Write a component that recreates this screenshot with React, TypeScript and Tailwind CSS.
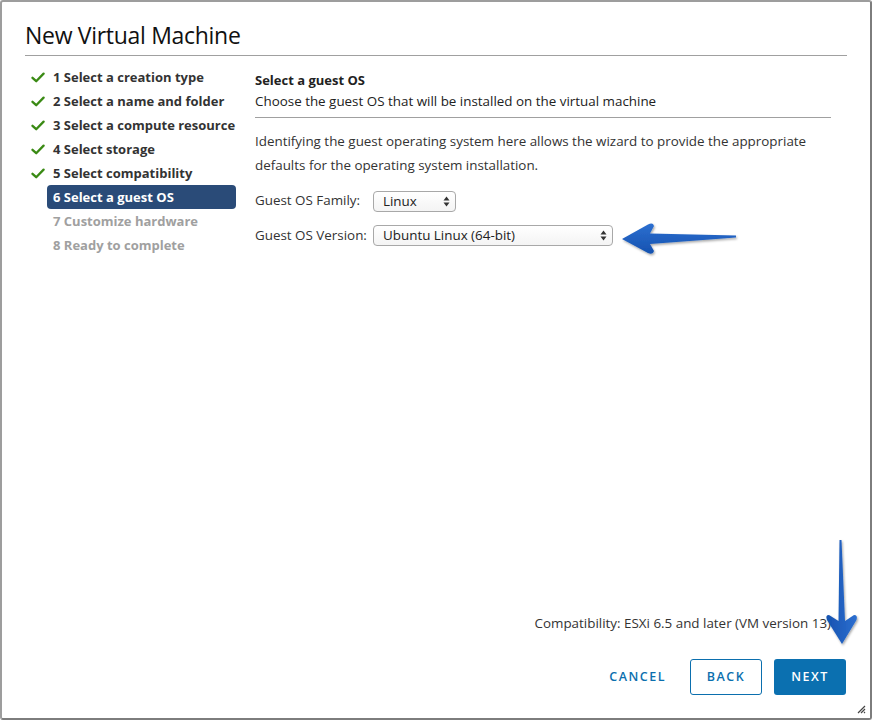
import React from 'react';

const steps = [
  { label: '1 Select a creation type', state: 'done' },
  { label: '2 Select a name and folder', state: 'done' },
  { label: '3 Select a compute resource', state: 'done' },
  { label: '4 Select storage', state: 'done' },
  { label: '5 Select compatibility', state: 'done' },
  { label: '6 Select a guest OS', state: 'active' },
  { label: '7 Customize hardware', state: 'todo' },
  { label: '8 Ready to complete', state: 'todo' },
];

function Check() {
  return (
    <svg width="14" height="11" viewBox="0 0 14 11">
      <path d="M1.5 5.8 L5.2 9.2 L12.6 1.6" fill="none" stroke="#3a8a14" strokeWidth="2.3" strokeLinecap="round" strokeLinejoin="round" />
    </svg>
  );
}

function Spinner() {
  return (
    <svg width="7" height="11" viewBox="0 0 7 11" className="shrink-0">
      <path d="M3.5 0.5 L6.5 4.5 L0.5 4.5 Z" fill="#333" />
      <path d="M3.5 10.5 L6.5 6.5 L0.5 6.5 Z" fill="#333" />
    </svg>
  );
}

function Select({ value, width }: { value: string; width: string }) {
  return (
    <div className={`${width} h-[21px] flex items-center justify-between pl-[9px] pr-[5px] border border-[#a8a8a8] rounded-[4px] bg-gradient-to-b from-white to-[#f4f4f4] text-[13.4px] text-[#222]`}>
      <span>{value}</span>
      <Spinner />
    </div>
  );
}

export default function App() {
  return (
    <div
      className="relative w-[872px] h-[720px] flex flex-col bg-white border-2 border-t-[#9d9d9d] border-l-[#9d9d9d] border-r-[#7d7d7d] border-b-[#7d7d7d] rounded-[3px] text-[#333]"
      style={{ fontFamily: '"Open Sans", "Liberation Sans", sans-serif' }}
    >
      {/* header */}
      <div className="px-[23px] pt-[17px]">
        <h1 className="h-[32px] leading-[32px] text-[23px] font-normal text-[#111] tracking-[-0.3px]">New Virtual Machine</h1>
        <div className="mt-[4px] h-px bg-[#a0a0a0]" />
      </div>

      {/* body */}
      <div className="flex-1 flex pl-[23px] pt-[9px]">
        <ul className="w-[211px] shrink-0">
          {steps.map((s) => (
            <li key={s.label} className="flex items-center h-[24px]">
              <span className="w-[22px] shrink-0 flex justify-end pr-[2px]">{s.state === 'done' && <Check />}</span>
              <span
                className={`flex-1 h-[24px] leading-[24px] px-[6px] rounded-[4px] text-[13px] font-bold whitespace-nowrap ${
                  s.state === 'active' ? 'bg-[#2a4b78] text-white' : s.state === 'done' ? 'text-[#333]' : 'text-[#a0a0a0]'
                }`}
              >
                {s.label}
              </span>
            </li>
          ))}
        </ul>

        <div className="ml-[19px] w-[576px] pt-[5px]">
          <div className="pb-[5px] border-b border-[#a0a0a0]">
            <div className="leading-[21px] text-[13px] font-bold text-[#222]">Select a guest OS</div>
            <div className="leading-[21px] text-[13.4px] text-[#222]">Choose the guest OS that will be installed on the virtual machine</div>
          </div>
          <p className="mt-[11px] leading-[24px] text-[13.4px] text-[#333]">
            Identifying the guest operating system here allows the wizard to provide the appropriate defaults for the operating system installation.
          </p>
          <div className="mt-[14px] flex items-center">
            <span className="w-[118px] text-[13.4px] text-[#333] -mt-[3px]">Guest OS Family:</span>
            <Select value="Linux" width="w-[83px]" />
          </div>
          <div className="mt-[13px] flex items-center">
            <span className="w-[118px] text-[13.4px] text-[#333]">Guest OS Version:</span>
            <Select value="Ubuntu Linux (64-bit)" width="w-[240px]" />
          </div>
        </div>
      </div>

      {/* footer */}
      <div className="pr-[39px] text-right text-[13.4px] leading-[20px] text-[#333]">
        Compatibility: ESXi 6.5 and later (VM version 13)
      </div>
      <div className="flex justify-end items-center gap-[12px] pr-[24px] pt-[26px] pb-[23px]">
        <button className="h-[36px] px-[12px] text-[12.5px] font-semibold tracking-[0.12em] text-[#0b6fae]">CANCEL</button>
        <button className="w-[72px] h-[36px] border border-[#0b6fae] rounded-[3px] text-[12.5px] font-semibold tracking-[0.12em] text-[#0b6fae] bg-white">BACK</button>
        <button className="w-[72px] h-[36px] rounded-[3px] text-[12.5px] font-semibold tracking-[0.12em] text-white bg-[#0b70b0]">NEXT</button>
      </div>

      {/* resize grip */}
      <svg className="absolute right-[4px] bottom-[4px]" width="10" height="10" viewBox="0 0 10 10">
        <path d="M9 2 L2 9 M9 5 L5 9 M9 8 L8 9" stroke="#444" strokeWidth="1.2" />
      </svg>

      {/* annotation arrows */}
      <svg className="absolute left-0 top-0 pointer-events-none" width="872" height="720">
        <defs>
          <linearGradient id="ag" x1="0" y1="0" x2="0" y2="1">
            <stop offset="0" stopColor="#2d6fd0" />
            <stop offset="1" stopColor="#1552b0" />
          </linearGradient>
          <linearGradient id="dg" x1="0" y1="0" x2="1" y2="0">
            <stop offset="0" stopColor="#1552b0" />
            <stop offset="1" stopColor="#2d6fd0" />
          </linearGradient>
          <filter id="sh" x="-10%" y="-10%" width="130%" height="130%">
            <feDropShadow dx="1" dy="1.5" stdDeviation="1" floodColor="#000" floodOpacity="0.35" />
          </filter>
        </defs>
        <path
          d="M620 237 L646 222.5 Q651 220 652 224 L648 231.5 L734 233.5 L734 235.5 L648 242 L652 249 Q651 253 646 251 Z"
          fill="url(#ag)"
          filter="url(#sh)"
        />
        <path
          d="M840 642 L825 618 Q823 613 827 613 L836.5 619 L837.5 538 L839.5 538 L843 619 L852 613 Q856 613 854.5 618 Z"
          fill="url(#dg)"
          filter="url(#sh)"
        />
      </svg>
    </div>
  );
}
